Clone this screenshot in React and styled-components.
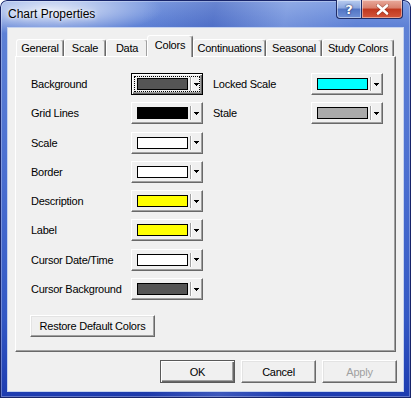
import React from "react";
import styled, { createGlobalStyle } from "styled-components";

const GlobalStyle = createGlobalStyle`
  html, body {
    margin: 0;
    padding: 0;
    background: #fff;
  }
  body {
    font-family: "Liberation Sans", Arial, sans-serif;
  }
`;

const tabs = [
  { name: "General", w: 48 },
  { name: "Scale", w: 42 },
  { name: "Data", w: 42 },
  { name: "Colors", w: 46, active: true },
  { name: "Continuations", w: 73 },
  { name: "Seasonal", w: 56 },
  { name: "Study Colors", w: 72 },
];

const leftColors = [
  { label: "Background", color: "#555555", focused: true },
  { label: "Grid Lines", color: "#000000" },
  { label: "Scale", color: "#ffffff" },
  { label: "Border", color: "#ffffff" },
  { label: "Description", color: "#ffff00" },
  { label: "Label", color: "#ffff00" },
  { label: "Cursor Date/Time", color: "#ffffff" },
  { label: "Cursor Background", color: "#555555" },
];

const rightColors = [
  { label: "Locked Scale", color: "#00ffff" },
  { label: "Stale", color: "#aaaaaa" },
];

const ColorCombo = ({ color, focused }) => (
  <Combo $focused={focused}>
    <FocusArea $focused={focused}>
      <Swatch $color={color} />
      <Separator />
      <svg width="5" height="3" viewBox="0 0 5 3" style={{ marginLeft: 2 }}>
        <rect x="0" y="0" width="5" height="1" fill="#000" />
        <rect x="1" y="1" width="3" height="1" fill="#000" />
        <rect x="2" y="2" width="1" height="1" fill="#000" />
      </svg>
    </FocusArea>
  </Combo>
);

const App = () => {
  return (
    <>
      <GlobalStyle />
      <Window>
        <TitleBar>
          <Title>Chart Properties</Title>
          <CaptionButtons>
            <HelpButton>?</HelpButton>
            <CloseButton>
              <svg width="13" height="11" viewBox="0 0 13 11">
                <path
                  d="M2 1.5 L11 9.5 M11 1.5 L2 9.5"
                  stroke="#5a1a10"
                  strokeWidth="4"
                  strokeLinecap="round"
                  opacity="0.35"
                />
                <path
                  d="M2 1.5 L11 9.5 M11 1.5 L2 9.5"
                  stroke="#fff"
                  strokeWidth="2.6"
                  strokeLinecap="round"
                />
              </svg>
            </CloseButton>
          </CaptionButtons>
        </TitleBar>
        <Client>
          <TabStrip>
            {tabs.map((t) => (
              <Tab key={t.name} $w={t.w} $active={t.active}>
                {t.name}
              </Tab>
            ))}
          </TabStrip>
          <Panel>
            <Columns>
              <Column>
                {leftColors.map((c) => (
                  <Row key={c.label}>
                    <Label $w={100}>{c.label}</Label>
                    <ColorCombo color={c.color} focused={c.focused} />
                  </Row>
                ))}
              </Column>
              <Column>
                {rightColors.map((c) => (
                  <Row key={c.label}>
                    <Label $w={98}>{c.label}</Label>
                    <ColorCombo color={c.color} />
                  </Row>
                ))}
              </Column>
            </Columns>
            <RestoreButton>Restore Default Colors</RestoreButton>
          </Panel>
          <ButtonRow>
            <Button $default>OK</Button>
            <Button>Cancel</Button>
            <Button disabled>Apply</Button>
          </ButtonRow>
        </Client>
      </Window>
    </>
  );
};

export default App;

const Window = styled.div`
  width: 411px;
  height: 398px;
  box-sizing: border-box;
  display: flex;
  flex-direction: column;
  padding: 0 8px 7px;
  border-radius: 7px 7px 0 0;
  overflow: hidden;
  background:
    radial-gradient(ellipse 150px 34px at 50px 10px, rgba(255, 255, 255, 0.8), rgba(255, 255, 255, 0) 75%),
    linear-gradient(100deg, rgba(255, 255, 255, 0) 30%, rgba(30, 50, 150, 0.22) 45%, rgba(255, 255, 255, 0.14) 60%, rgba(255, 255, 255, 0) 75%),
    linear-gradient(to bottom, #7f9ee2 0px, #5f82d6 26px, #4a6ed0 45%, #3358c4 80%, #1c3bb0 100%);
  box-shadow: inset 0 0 0 1px #17246a, inset 0 0 0 2px rgba(255, 255, 255, 0.3);
`;

const TitleBar = styled.div`
  height: 28px;
  flex-shrink: 0;
  display: flex;
  justify-content: space-between;
  align-items: flex-start;
`;

const Title = styled.div`
  font-family: "Liberation Sans", Arial, sans-serif;
  font-size: 12px;
  line-height: 28px;
  color: #000;
  text-shadow: 0 0 6px rgba(255, 255, 255, 0.95), 0 0 3px rgba(255, 255, 255, 0.8);
`;

const CaptionButtons = styled.div`
  display: flex;
`;

const CaptionButton = styled.div`
  height: 19px;
  box-sizing: border-box;
  display: flex;
  align-items: center;
  justify-content: center;
  border: 1px solid #1f2c66;
  border-top: none;
  box-shadow: inset 0 0 0 1px rgba(255, 255, 255, 0.45);
`;

const HelpButton = styled(CaptionButton)`
  width: 25px;
  border-right: none;
  border-radius: 0 0 0 4px;
  background: linear-gradient(to bottom, #b9cdf0 0%, #8ba6de 45%, #5174c4 50%, #6f90d6 100%);
  color: #fff;
  font-family: "DejaVu Sans", sans-serif;
  font-weight: bold;
  font-size: 13px;
  text-shadow: 0 0 2px #1d2d6a, 0 0 1px #1d2d6a;
`;

const CloseButton = styled(CaptionButton)`
  width: 42px;
  border-radius: 0 0 4px 0;
  background: linear-gradient(to bottom, #e9aa9c 0%, #d87f6c 45%, #c0371e 50%, #d4563b 100%);
`;

const Client = styled.div`
  flex: 1;
  display: flex;
  flex-direction: column;
  background: #f0f0f0;
  box-sizing: border-box;
  padding: 7px 7px 8px 7px;
  box-shadow: 0 0 0 1px #c4d2ee;
`;

const TabStrip = styled.div`
  height: 21px;
  flex-shrink: 0;
  display: flex;
  align-items: flex-end;
  padding-left: 1px;
`;

const Tab = styled.div`
  width: ${(p) => p.$w}px;
  height: ${(p) => (p.$active ? 22 : 17)}px;
  box-sizing: border-box;
  display: flex;
  align-items: center;
  justify-content: center;
  background: #f0f0f0;
  border: 1px solid;
  border-bottom: none;
  border-color: #fff #696969 transparent #fff;
  border-radius: 3px 3px 0 0;
  box-shadow: inset -1px 0 0 #a0a0a0;
  font-size: 11px;
  letter-spacing: -0.25px;
  color: #000;
  white-space: nowrap;
  ${(p) =>
    p.$active &&
    `
    margin-left: -1px;
    margin-bottom: -1px;
    padding-bottom: 3px;
    position: relative;
    z-index: 1;
  `}
`;

const Panel = styled.div`
  flex: 1;
  box-sizing: border-box;
  border: 1px solid;
  border-color: #fff #696969 #696969 #fff;
  box-shadow: inset -1px -1px 0 #a0a0a0;
  padding: 16px 0 0 15px;
  display: flex;
  flex-direction: column;
  align-items: flex-start;
`;

const Columns = styled.div`
  display: flex;
  gap: 10px;
`;

const Column = styled.div`
  display: flex;
  flex-direction: column;
  gap: 7.3px;
`;

const Row = styled.div`
  display: flex;
  align-items: center;
  height: 22px;
`;

const Label = styled.div`
  width: ${(p) => p.$w}px;
  font-size: 11px;
  letter-spacing: -0.25px;
  color: #000;
  white-space: nowrap;
`;

const Combo = styled.div`
  width: 72px;
  height: 22px;
  box-sizing: border-box;
  display: flex;
  padding: 2px;
  background: #f0f0f0;
  border: 1px solid;
  border-color: ${(p) => (p.$focused ? "#000" : "#fff #696969 #696969 #fff")};
  box-shadow: ${(p) =>
    p.$focused
      ? "inset 1px 1px 0 #fff, inset -1px -1px 0 #696969, inset -2px -2px 0 #a0a0a0"
      : "inset -1px -1px 0 #a0a0a0"};
`;

const FocusArea = styled.div`
  flex: 1;
  display: flex;
  align-items: center;
  padding-left: 2px;
  border: 1px dotted ${(p) => (p.$focused ? "#000" : "transparent")};
`;

const Swatch = styled.div`
  width: 51px;
  height: 12px;
  box-sizing: border-box;
  border: 1px solid #000;
  background: ${(p) => p.$color};
`;

const Separator = styled.div`
  width: 0;
  height: 14px;
  margin-left: 2px;
  border-left: 1px solid #a0a0a0;
  border-right: 1px solid #fff;
`;

const Button = styled.button`
  width: 75px;
  height: 23px;
  box-sizing: border-box;
  padding: 0;
  margin: 0;
  font-family: "Liberation Sans", Arial, sans-serif;
  font-size: 11px;
  letter-spacing: -0.25px;
  color: ${(p) => (p.disabled ? "#a0a0a0" : "#000")};
  background: #f0f0f0;
  border: 1px solid;
  border-color: ${(p) => (p.$default ? "#5a5a5a" : "#fff #696969 #696969 #fff")};
  box-shadow: ${(p) =>
    p.$default
      ? "inset 1px 1px 0 #fff, inset -1px -1px 0 #696969, inset -2px -2px 0 #a0a0a0"
      : "inset -1px -1px 0 #a0a0a0, inset 1px 1px 0 #e3e3e3"};
`;

const RestoreButton = styled(Button)`
  width: 125px;
  height: 22px;
  margin: 15px 0 0 -1px;
`;

const ButtonRow = styled.div`
  display: flex;
  justify-content: flex-end;
  gap: 6px;
  margin: 8px -1px 0 0;
`;
